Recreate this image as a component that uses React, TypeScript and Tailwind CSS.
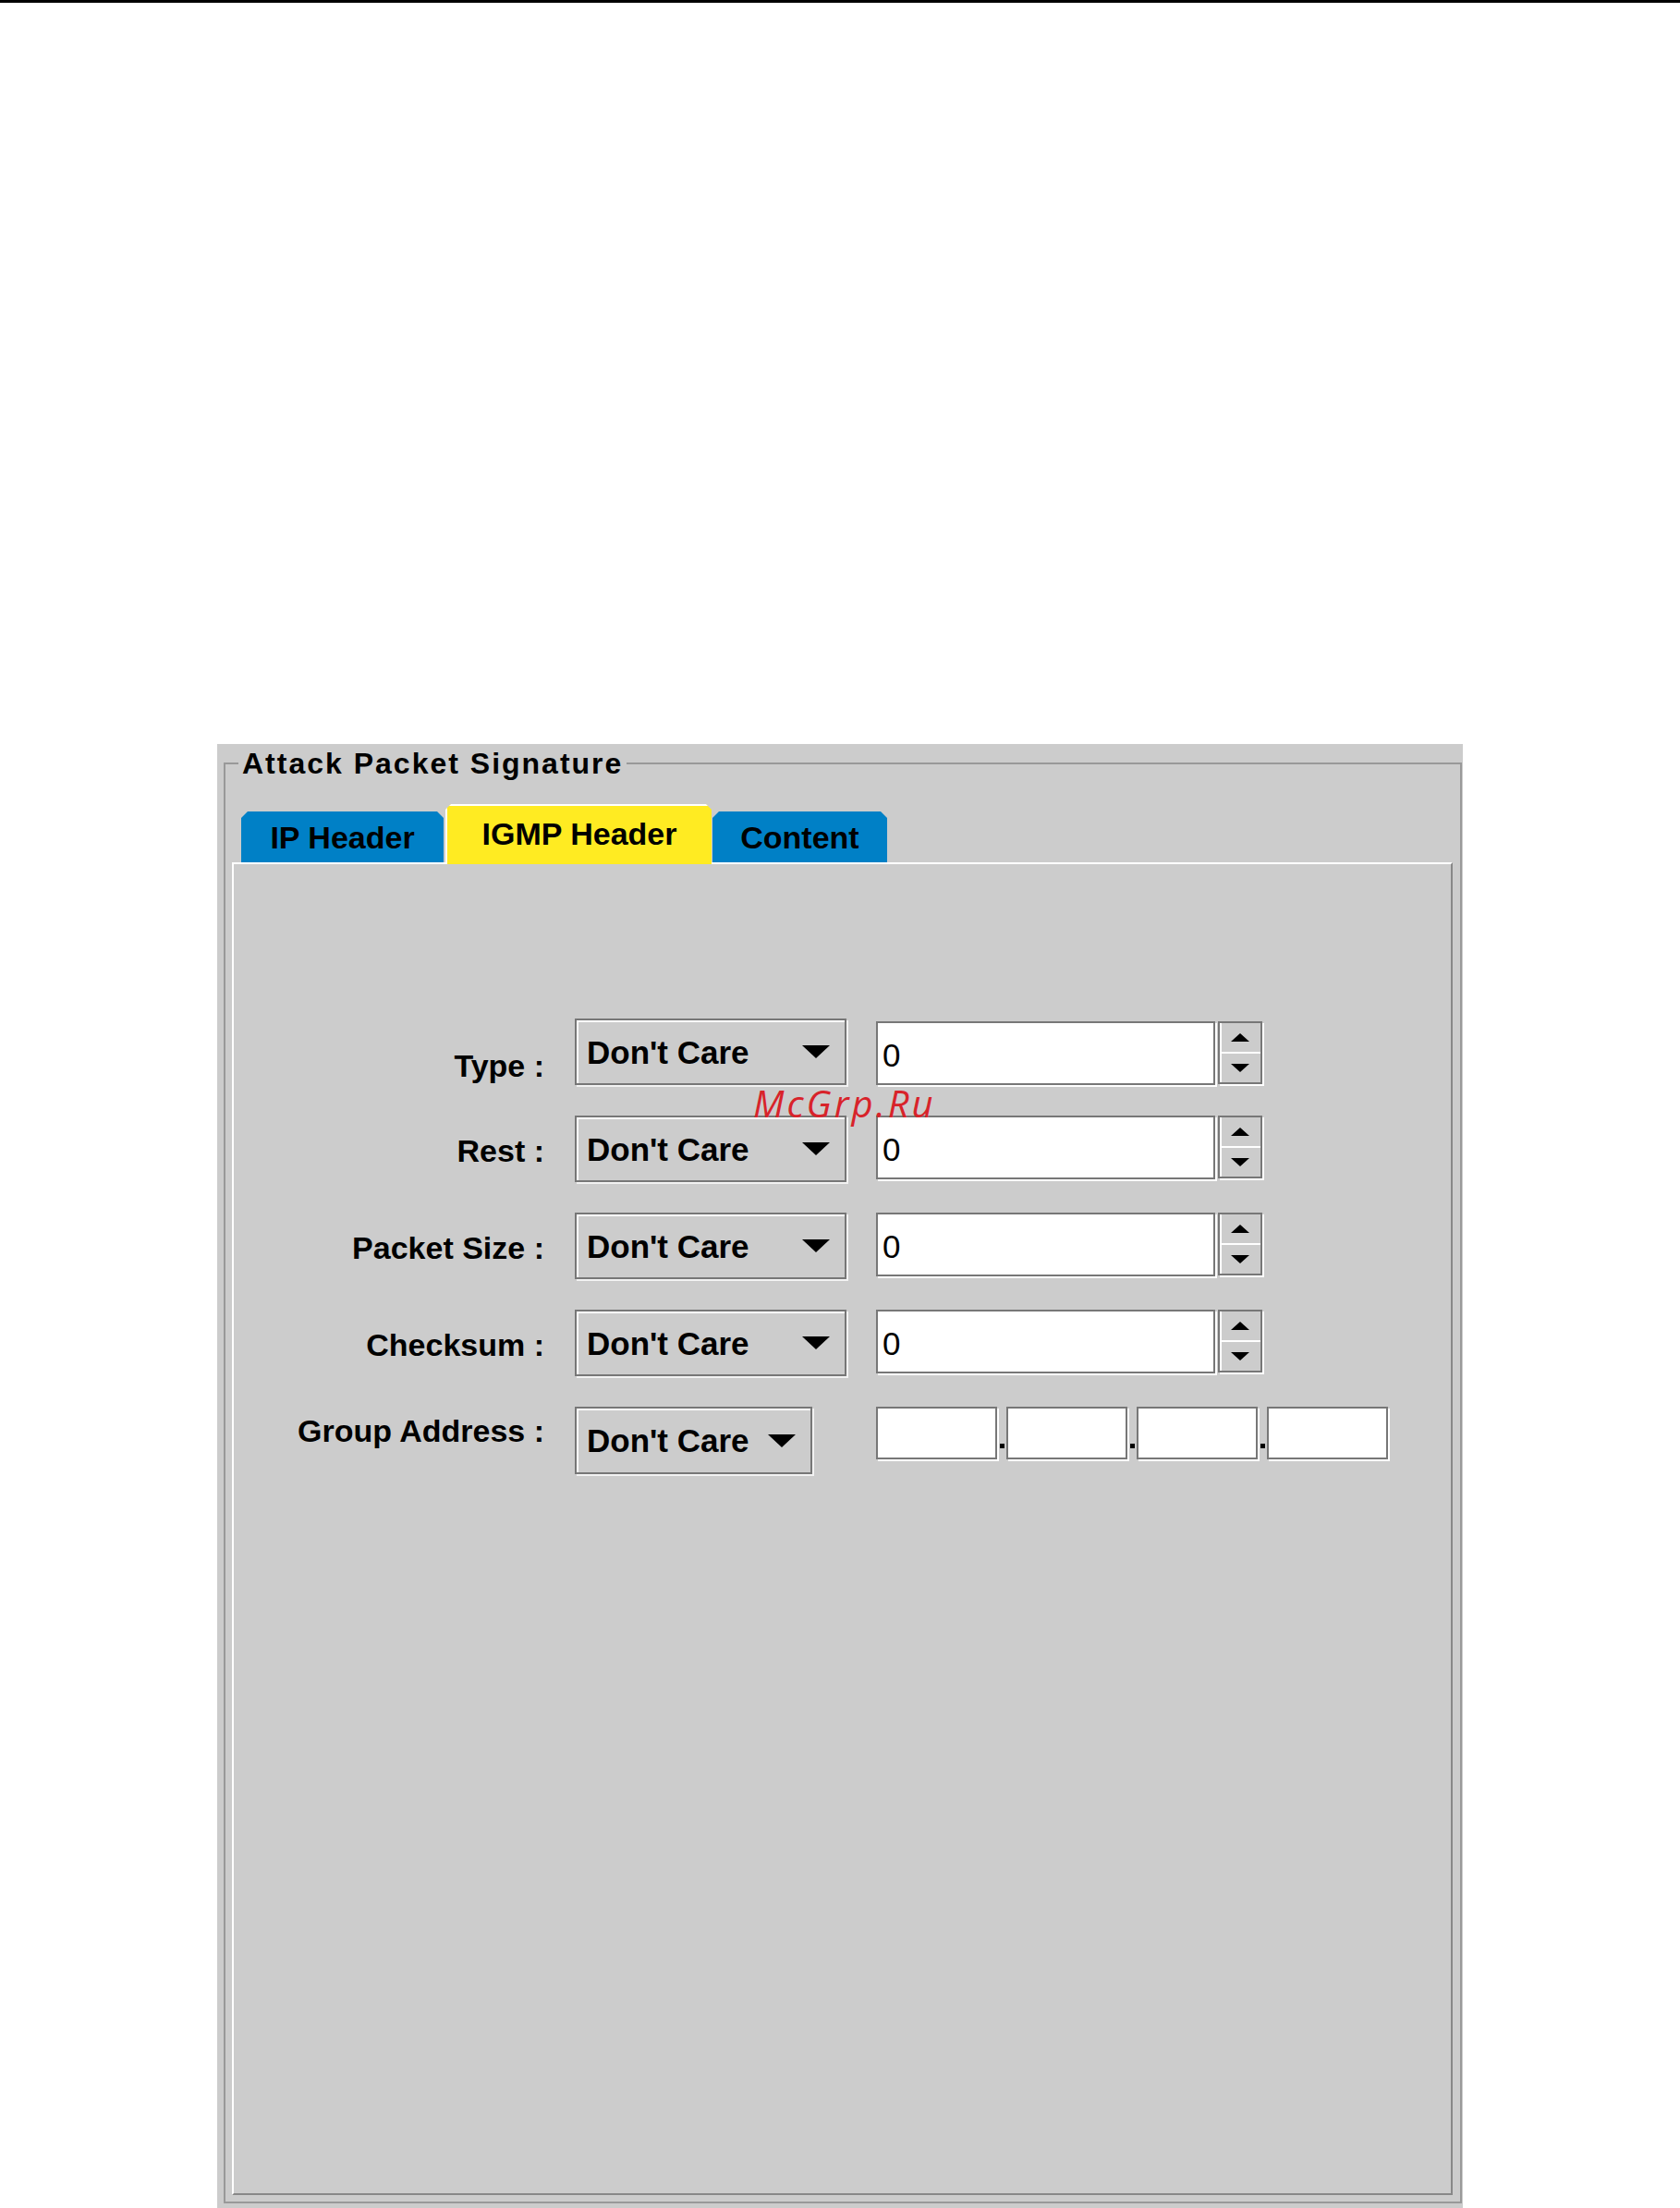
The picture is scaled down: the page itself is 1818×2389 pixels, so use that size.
import React from "react";

// Java-style "Attack Packet Signature" editor, IGMP tab selected

type RowDef = {
  label: string;
  labelClass: string;
  rowKind: "spin" | "ip";
  fieldClass?: string;
};

const rows: RowDef[] = [
  { label: "Type :", labelClass: "mt-[34px]", rowKind: "spin", fieldClass: "mt-[3px]" },
  { label: "Rest :", labelClass: "mt-[21px]", rowKind: "spin", fieldClass: "mt-0" },
  { label: "Packet Size :", labelClass: "mt-[21px]", rowKind: "spin", fieldClass: "mt-0" },
  { label: "Checksum :", labelClass: "mt-[21px]", rowKind: "spin", fieldClass: "mt-0" },
  { label: "Group Address :", labelClass: "mt-[9px]", rowKind: "ip" },
];

function Caret() {
  return (
    <svg width="30" height="14" viewBox="0 0 30 14" className="shrink-0">
      <polygon points="0,0 30,0 15,14" fill="#000" />
    </svg>
  );
}

function Combo({ narrow }: { narrow?: boolean }) {
  return (
    <div
      className={
        narrow
          ? "ml-[33px] flex h-[73px] w-[257px] items-center justify-between border-2 border-[#777777] bg-[#cccccc] pl-[11px] pr-[16px] shadow-[inset_2px_2px_0_#ffffff,2px_2px_0_#f2f2f2]"
          : "ml-[33px] flex h-[72px] w-[294px] items-center justify-between border-2 border-[#777777] bg-[#cccccc] pl-[11px] pr-[16px] shadow-[inset_2px_2px_0_#ffffff,2px_2px_0_#f2f2f2]"
      }
    >
      <span className="text-[35px] font-bold leading-none">Don't Care</span>
      <Caret />
    </div>
  );
}

function NumField({ className }: { className?: string }) {
  return (
    <div className={`ml-[32px] flex ${className ?? ""}`}>
      <div className="flex h-[69px] w-[367px] items-center border-2 border-[#777777] bg-white pl-[5px] pt-[4px] shadow-[2px_2px_0_#ffffff]">
        <span className="text-[35px] leading-none">0</span>
      </div>
      <div className="ml-[3px] flex h-[68px] w-[48px] flex-col border-2 border-[#777777] shadow-[2px_2px_0_#ffffff]">
        <div className="flex flex-1 items-center justify-center shadow-[inset_2px_0_0_#ffffff]">
          <svg width="20" height="9" viewBox="0 0 20 9">
            <polygon points="10,0 20,9 0,9" fill="#000" />
          </svg>
        </div>
        <div className="flex flex-1 items-center justify-center border-t-2 border-white shadow-[inset_2px_0_0_#ffffff]">
          <svg width="20" height="9" viewBox="0 0 20 9">
            <polygon points="0,0 20,0 10,9" fill="#000" />
          </svg>
        </div>
      </div>
    </div>
  );
}

function IpBoxes() {
  return (
    <div className="ml-[69px] flex">
      {[0, 1, 2, 3].map((i) => (
        <React.Fragment key={i}>
          {i > 0 && (
            <div className="flex w-[10px] items-end justify-center pb-[12px]">
              <div className="h-[5px] w-[5px] bg-black" />
            </div>
          )}
          <div className="h-[57px] w-[131px] border-2 border-[#777777] bg-white shadow-[2px_2px_0_#ffffff]" />
        </React.Fragment>
      ))}
    </div>
  );
}

export default function App() {
  return (
    <div className="relative h-[2389px] w-[1818px] overflow-hidden bg-white font-['Liberation_Sans',Arial,sans-serif] text-black">
      <div className="h-[3px] w-full bg-black" />

      <div className="ml-[235px] mt-[802px] h-[1584px] w-[1348px] bg-[#cccccc] pt-[5px]">
        <fieldset className="ml-[7px] h-[1574px] w-[1340px] border-2 border-[#999999] pl-[7px] pr-[8px]">
          <legend className="ml-[7px] px-[4px] text-[32px] font-bold leading-[32px] tracking-[2px]">
            Attack Packet Signature
          </legend>

          {/* tab strip */}
          <div className="ml-[10px] mt-[28px] flex h-[63px] items-end">
            <div className="flex h-[55px] w-[219px] items-center justify-center bg-[#0080c6] [clip-path:polygon(7px_0,calc(100%-7px)_0,100%_7px,100%_100%,0_100%,0_7px)]">
              <span className="text-[34px] font-bold leading-none">IP Header</span>
            </div>
            <div className="relative z-10 mb-[-2px] ml-[2px] flex h-[65px] w-[288px] items-center justify-center border-l-2 border-t-2 border-white bg-[#ffeb22] pb-[4px] [clip-path:polygon(6px_0,calc(100%-6px)_0,100%_6px,100%_100%,0_100%,0_6px)]">
              <span className="text-[34px] font-bold leading-none">IGMP Header</span>
            </div>
            <div className="ml-[1px] flex h-[55px] w-[189px] items-center justify-center bg-[#0080c6] [clip-path:polygon(7px_0,calc(100%-7px)_0,100%_7px,100%_100%,0_100%,0_7px)]">
              <span className="text-[34px] font-bold leading-none">Content</span>
            </div>
          </div>

          {/* tab body */}
          <div className="h-[1442px] w-[1321px] border-2 border-b-[#888888] border-l-white border-r-[#888888] border-t-white pt-[167px]">
            <div className="flex flex-col gap-[33px]">
              {rows.map((r) => (
                <div key={r.label} className="flex items-start">
                  <div className={`w-[336px] text-right text-[34px] font-bold leading-[34px] ${r.labelClass}`}>
                    {r.label}
                  </div>
                  {r.rowKind === "spin" ? (
                    <>
                      <Combo />
                      <NumField className={r.fieldClass} />
                    </>
                  ) : (
                    <>
                      <Combo narrow />
                      <IpBoxes />
                    </>
                  )}
                </div>
              ))}
            </div>
          </div>
        </fieldset>
      </div>

      <div className="absolute left-[815px] top-[1174px] font-['Open_Sans',sans-serif] text-[40px] italic leading-none tracking-[3px] text-[#d8232a]">
        McGrp.Ru
      </div>
    </div>
  );
}
